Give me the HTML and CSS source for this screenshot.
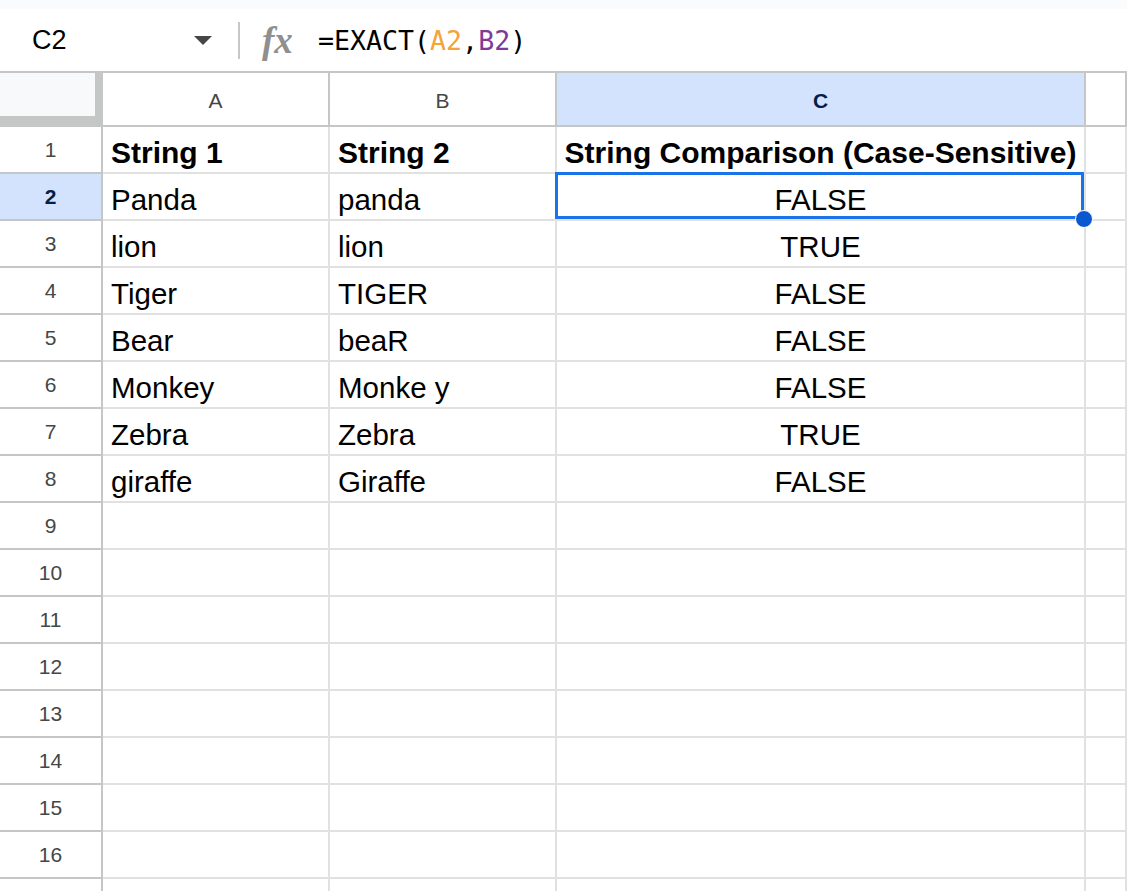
FILE: index.html
```html
<!DOCTYPE html>
<html lang="en">
<head>
    <meta charset="UTF-8">
    <meta name="viewport" content="width=device-width, initial-scale=1.0">
    <title>EXACT</title>
    <link rel="stylesheet" href="styles.css">
</head>
<body>
    <div class="strip"></div>

    <!-- formula bar -->
    <div class="formula-bar">
        <div class="name-box">
            <span>C2</span>
            <span class="caret"></span>
        </div>
        <div class="divider"></div>
        <span class="fx">fx</span>
        <span class="formula">=EXACT(<span class="ref-a">A2</span>,<span class="ref-b">B2</span>)</span>
    </div>

    <div class="sheet">
        <div class="row head">
            <div class="corner"></div>
            <div class="col-head">A</div>
            <div class="col-head">B</div>
            <div class="col-head selected">C</div>
            <div class="col-head"></div>
        </div>

        <div class="row">
            <div class="row-head">1</div>
            <div class="cell bold">String 1</div>
            <div class="cell bold">String 2</div>
            <div class="cell bold center">String Comparison (Case-Sensitive)</div>
            <div class="cell"></div>
        </div>
        <div class="row">
            <div class="row-head selected">2</div>
            <div class="cell">Panda</div>
            <div class="cell">panda</div>
            <div class="cell center active">FALSE<span class="handle"></span></div>
            <div class="cell"></div>
        </div>
        <div class="row">
            <div class="row-head">3</div>
            <div class="cell">lion</div>
            <div class="cell">lion</div>
            <div class="cell center">TRUE</div>
            <div class="cell"></div>
        </div>
        <div class="row">
            <div class="row-head">4</div>
            <div class="cell">Tiger</div>
            <div class="cell">TIGER</div>
            <div class="cell center">FALSE</div>
            <div class="cell"></div>
        </div>
        <div class="row">
            <div class="row-head">5</div>
            <div class="cell">Bear</div>
            <div class="cell">beaR</div>
            <div class="cell center">FALSE</div>
            <div class="cell"></div>
        </div>
        <div class="row">
            <div class="row-head">6</div>
            <div class="cell">Monkey</div>
            <div class="cell">Monke y</div>
            <div class="cell center">FALSE</div>
            <div class="cell"></div>
        </div>
        <div class="row">
            <div class="row-head">7</div>
            <div class="cell">Zebra</div>
            <div class="cell">Zebra</div>
            <div class="cell center">TRUE</div>
            <div class="cell"></div>
        </div>
        <div class="row">
            <div class="row-head">8</div>
            <div class="cell">giraffe</div>
            <div class="cell">Giraffe</div>
            <div class="cell center">FALSE</div>
            <div class="cell"></div>
        </div>
        <div class="row">
            <div class="row-head">9</div>
            <div class="cell"></div><div class="cell"></div><div class="cell"></div><div class="cell"></div>
        </div>
        <div class="row">
            <div class="row-head">10</div>
            <div class="cell"></div><div class="cell"></div><div class="cell"></div><div class="cell"></div>
        </div>
        <div class="row">
            <div class="row-head">11</div>
            <div class="cell"></div><div class="cell"></div><div class="cell"></div><div class="cell"></div>
        </div>
        <div class="row">
            <div class="row-head">12</div>
            <div class="cell"></div><div class="cell"></div><div class="cell"></div><div class="cell"></div>
        </div>
        <div class="row">
            <div class="row-head">13</div>
            <div class="cell"></div><div class="cell"></div><div class="cell"></div><div class="cell"></div>
        </div>
        <div class="row">
            <div class="row-head">14</div>
            <div class="cell"></div><div class="cell"></div><div class="cell"></div><div class="cell"></div>
        </div>
        <div class="row">
            <div class="row-head">15</div>
            <div class="cell"></div><div class="cell"></div><div class="cell"></div><div class="cell"></div>
        </div>
        <div class="row">
            <div class="row-head">16</div>
            <div class="cell"></div><div class="cell"></div><div class="cell"></div><div class="cell"></div>
        </div>
        <!-- row 17 is only partly in view -->
        <div class="row">
            <div class="row-head"></div>
            <div class="cell"></div><div class="cell"></div><div class="cell"></div><div class="cell"></div>
        </div>
    </div>
</body>
</html>
```

FILE: styles.css
```css
* {
    box-sizing: border-box;
}

body {
    margin: 0;
    height: 891px;
    overflow: hidden;
    background-color: #fff;
    font-family: "Liberation Sans", Arial, sans-serif;
    color: #000;
}

.strip {
    height: 9px;
    background-color: #f9fbfd;
}

/* formula bar */
.formula-bar {
    display: flex;
    align-items: center;
    height: 64px;
    border-bottom: 2px solid #c4c7c5;
}

.name-box {
    display: flex;
    align-items: center;
    justify-content: space-between;
    width: 212px;
    padding-left: 32px;
    font-size: 27px;
}

.caret {
    width: 0;
    height: 0;
    border-left: 9px solid transparent;
    border-right: 9px solid transparent;
    border-top: 9px solid #444746;
}

.divider {
    width: 2px;
    height: 37px;
    margin-left: 26px;
    background-color: #c7c7c7;
}

.fx {
    width: 36px;
    margin-left: 22px;
    font-family: "Liberation Serif", serif;
    font-style: italic;
    font-weight: bold;
    font-size: 37px;
    line-height: 1;
    color: #8f8f8f;
}

.formula {
    margin-left: 20px;
    font-family: "DejaVu Sans Mono", monospace;
    font-size: 26.6px;
}

.ref-a {
    color: #f5a33b;
}

.ref-b {
    color: #7e3a99;
}

/* grid */
.row {
    display: grid;
    grid-template-columns: 103px 227px 227px 529px 1fr;
    height: 47px;
}

.row.head {
    height: 54px;
}

.corner {
    background-color: #f8f9fa;
    border-right: 8px solid #c4c7c5;
    border-bottom: 11px solid #c4c7c5;
}

.col-head {
    padding-top: 4px;
    border-right: 2px solid #c4c7c5;
    border-bottom: 2px solid #c4c7c5;
    font-size: 21px;
    line-height: 48px;
    text-align: center;
    color: #444746;
}

.row-head {
    border-right: 2px solid #c4c7c5;
    border-bottom: 2px solid #c4c7c5;
    font-size: 21px;
    line-height: 45px;
    text-align: center;
    color: #444746;
}

.col-head.selected,
.row-head.selected {
    background-color: #d3e3fd;
    color: #041e49;
    font-weight: bold;
}

.cell {
    padding-top: 6px;
    padding-left: 8px;
    border-right: 2px solid #e1e1e1;
    border-bottom: 2px solid #e1e1e1;
    font-size: 29.5px;
    line-height: 39px;
    white-space: nowrap;
}

.cell.bold {
    font-weight: bold;
    font-size: 30px;
}

.cell.center {
    padding-left: 0;
    text-align: center;
}

/* selected cell */
.cell.active {
    position: relative;
}

.cell.active::before {
    content: "";
    position: absolute;
    top: -2px;
    left: -2px;
    right: 0;
    bottom: 0;
    border: 3px solid #1a73e8;
}

.handle {
    position: absolute;
    right: -9px;
    bottom: -9px;
    width: 18px;
    height: 18px;
    border: 1px solid #fff;
    border-radius: 50%;
    background-color: #0b57d0;
}
```
